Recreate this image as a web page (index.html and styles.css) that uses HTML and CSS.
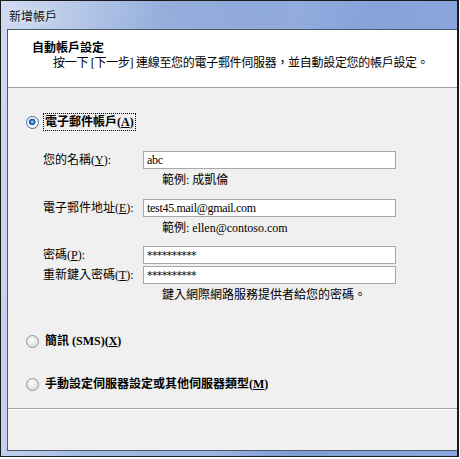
FILE: index.html
```html
<!DOCTYPE html>
<html lang="zh-Hant">
<head>
    <meta charset="UTF-8">
    <title>新增帳戶</title>
    <link rel="stylesheet" href="styles.css">
</head>
<body>
    <div class="window">
        <div class="titlebar">新增帳戶</div>
        <div class="client">
            <div class="header">
                <div class="header-title">自動帳戶設定</div>
                <div class="header-text">按一下 [下一步] 連線至您的電子郵件伺服器，並自動設定您的帳戶設定。</div>
            </div>

            <div class="body">
                <div class="option">
                    <span class="radio checked"></span>
                    <span class="option-label focused">電子郵件帳戶(<u>A</u>)</span>
                </div>

                <div class="form">
                    <label class="field-label">您的名稱(<u>Y</u>):</label>
                    <div class="input">abc</div>
                    <div class="hint">範例: 成凱倫</div>

                    <label class="field-label gap-email">電子郵件地址(<u>E</u>):</label>
                    <div class="input gap-email">test45.mail@gmail.com</div>
                    <div class="hint">範例: ellen@contoso.com</div>

                    <label class="field-label gap-pass">密碼(<u>P</u>):</label>
                    <div class="input gap-pass stars">**********</div>
                    <label class="field-label gap-pair">重新鍵入密碼(<u>T</u>):</label>
                    <div class="input gap-pair stars">**********</div>
                    <div class="hint">鍵入網際網路服務提供者給您的密碼。</div>
                </div>

                <div class="option sms">
                    <span class="radio"></span>
                    <span class="option-label">簡訊 (SMS)(<u>X</u>)</span>
                </div>

                <div class="option manual">
                    <span class="radio"></span>
                    <span class="option-label">手動設定伺服器設定或其他伺服器類型(<u>M</u>)</span>
                </div>
            </div>

            <div class="footer"></div>
        </div>
    </div>
</body>
</html>
```

FILE: styles.css
```css
html, body {
    margin: 0;
    padding: 0;
    background: #fff;
}
body {
    font-family: "Liberation Serif", "Noto Sans CJK TC", serif;
    font-size: 12px;
    color: #000;
}
.window {
    box-sizing: border-box;
    width: 459px;
    height: 457px;
    border: 1px solid #1b1b1b;
    border-right-width: 2px;
    display: flex;
    flex-direction: column;
    padding: 0 0 5px 6px;
    background:
        linear-gradient(100deg, rgba(255,255,255,0.35) 0, rgba(255,255,255,0) 30%, rgba(255,255,255,0.15) 55%, rgba(255,255,255,0) 70%),
        linear-gradient(to right, #b4c7e8 0, #9fb6e0 25%, #7f9dd6 60%, #8aa6dc 100%);
}
.titlebar {
    height: 28px;
    line-height: 30px;
    padding-left: 2px;
    font-family: "Noto Sans CJK TC", sans-serif;
    font-size: 12px;
    color: #111;
    text-shadow: 0 0 6px rgba(255,255,255,0.9);
}
.client {
    flex: 1;
    display: flex;
    flex-direction: column;
    background: #f0f0f0;
    border: 1px solid #4d5a6e;
    border-right: none;
}
.header {
    height: 58px;
    box-sizing: border-box;
    background: #fff;
    border-bottom: 1px solid #a0a0a0;
    padding: 9px 0 0 24px;
    line-height: 16px;
}
.header-title {
    font-family: "Noto Sans CJK TC", sans-serif;
    font-weight: bold;
}
.header-text {
    padding-left: 21px;
    letter-spacing: -0.3px;
}
.body {
    flex: 1;
    padding-top: 26px;
}
.option {
    display: flex;
    align-items: center;
    gap: 5px;
    padding-left: 18px;
    line-height: 16px;
}
.option-label {
    font-weight: bold;
    padding: 0 1px;
}
.option-label.focused {
    outline: 1px dotted #000;
    outline-offset: 0;
}
.radio {
    width: 11px;
    height: 11px;
    border-radius: 50%;
    border: 1px solid #929292;
    background: radial-gradient(circle at 45% 40%, #ffffff 0, #f0f0f0 30%, #cfcfcf 100%);
    box-shadow: inset 0 0 1px #fff;
}
.radio.checked {
    border-color: #3e6b9e;
    background: radial-gradient(circle at 48% 45%, #b6dcff 0, #3a88d8 1.5px, #174f9c 3px, #e9eef5 3.6px, #ffffff 4.6px, #d2d6dc 100%);
}
.form {
    display: grid;
    grid-template-columns: 100px 253px;
    padding: 21px 0 0 35px;
    line-height: 16px;
}
.field-label {
    align-self: center;
}
.input {
    box-sizing: border-box;
    height: 18px;
    border: 1px solid #a7a7a7;
    background: #fff;
    padding-left: 3px;
    line-height: 16px;
    letter-spacing: -0.3px;
}
.stars {
    font-family: "DejaVu Sans", sans-serif;
    font-size: 11px;
    letter-spacing: -0.6px;
    line-height: 18px;
}
.hint {
    grid-column: 2;
    padding: 3px 0 0 19px;
}
.gap-email {
    margin-top: 11px;
}
.gap-pass {
    margin-top: 10px;
}
.gap-pair {
    margin-top: 2px;
}
.sms {
    margin-top: 30px;
}
.manual {
    margin-top: 27px;
}
.footer {
    height: 41px;
    border-top: 1px solid #a0a0a0;
    box-shadow: inset 0 1px 0 #fff;
}
```
